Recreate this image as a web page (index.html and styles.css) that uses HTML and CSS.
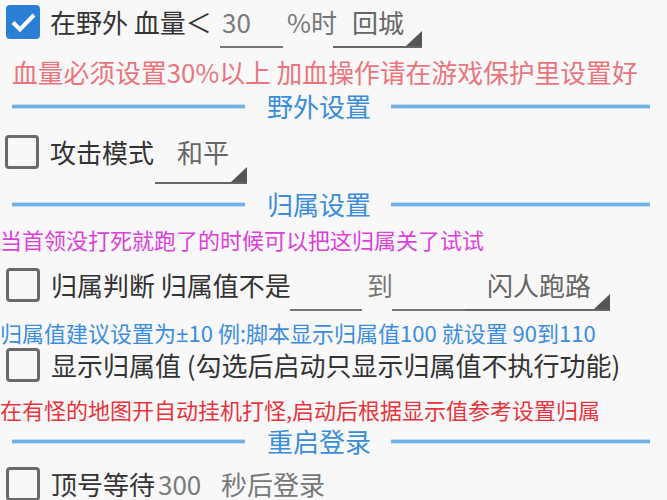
FILE: index.html
```html
<!DOCTYPE html>
<html lang="zh-CN">
<head>
<meta charset="utf-8">
<link rel="stylesheet" href="styles.css">
</head>
<body>
<div class="page">
  <div class="row row1">
    <span class="cb checked"><svg viewBox="0 0 34 34" width="34" height="34"><path d="M7 17.5 L14 24.5 L28 10" fill="none" stroke="#fff" stroke-width="4"/></svg></span>
    <span class="label l1">在野外 血量＜</span>
    <span class="field f1">30</span>
    <span class="label gray l1b">%时</span>
    <span class="spinner s1">回城</span>
  </div>
  <div class="note pink">血量必须设置30%以上 加血操作请在游戏保护里设置好</div>
  <div class="section sec1"><span class="line first"></span><span class="title">野外设置</span><span class="line"></span></div>
  <div class="row row2">
    <span class="cb"></span>
    <span class="label l2">攻击模式</span>
    <span class="spinner s2">和平</span>
  </div>
  <div class="section sec2"><span class="line first"></span><span class="title">归属设置</span><span class="line"></span></div>
  <div class="note small magenta">当首领没打死就跑了的时候可以把这归属关了试试</div>
  <div class="row row3">
    <span class="cb"></span>
    <span class="label l3">归属判断 归属值不是</span>
    <span class="field f2"></span>
    <span class="label gray to">到</span>
    <span class="field f3"></span>
    <span class="spinner s3">闪人跑路</span>
  </div>
  <div class="note small blue">归属值建议设置为<span class="latin">±</span>10 例:脚本显示归属值100 就设置 90到110</div>
  <div class="row row4">
    <span class="cb"></span>
    <span class="label">显示归属值 (勾选后启动只显示归属值不执行功能)</span>
  </div>
  <div class="note small red">在有怪的地图开自动挂机打怪,启动后根据显示值参考设置归属</div>
  <div class="section sec3"><span class="line first"></span><span class="title">重启登录</span><span class="line"></span></div>
  <div class="row row5">
    <span class="cb"></span>
    <span class="label l5">顶号等待</span>
    <span class="field f4">300</span>
    <span class="label gray">秒后登录</span>
  </div>
</div>
</body>
</html>
```

FILE: styles.css
```css
html, body {
  margin: 0;
  padding: 0;
  background: #f8f8f8;
}
body {
  width: 667px;
  height: 500px;
  overflow: hidden;
  font-family: "Noto Sans CJK SC", "Noto Sans", sans-serif;
  color: #333;
}
.page {
  display: flex;
  flex-direction: column;
}
.row {
  display: flex;
  align-items: flex-start;
  padding-left: 6px;
  box-sizing: border-box;
  font-size: 26px;
}
.cb {
  flex: none;
  width: 34px;
  height: 34px;
  box-sizing: border-box;
  border: 3px solid #6a6a6a;
  border-radius: 4px;
  margin-right: 10px;
}
.cb.checked {
  border: none;
  background: #2b7fd4;
}
.cb svg { display: block; }
.label {
  flex: none;
  line-height: 34px;
  white-space: nowrap;
}
.gray { color: #777; }
.field {
  flex: none;
  box-sizing: border-box;
  height: 43px;
  line-height: 34px;
  border-bottom: 2px solid #777;
  color: #7a7a7a;
  padding-left: 2px;
}
.spinner {
  flex: none;
  position: relative;
  box-sizing: border-box;
  height: 43px;
  line-height: 34px;
  border-bottom: 2px solid #666;
  color: #666;
}
.spinner::after {
  content: "";
  position: absolute;
  right: 0;
  bottom: 0;
  width: 0;
  height: 0;
  border-left: 16px solid transparent;
  border-bottom: 15px solid #555;
}
.row1 { height: 54px; padding-top: 5px; }
.l1 { width: 170px; }
.f1 { width: 63px; }
.l1b { width: 46px; margin-left: 4px; }
.s1 { width: 89px; padding-left: 19px; }
.row2 { height: 68px; padding-top: 13px; padding-left: 5px; }
.row2 .cb { margin-right: 11px; }
.l2 { width: 105px; }
.s2 { width: 92px; padding-left: 22px; height: 49px; }
.row3 { height: 56px; padding-top: 8px; }
.row3 .cb { margin-right: 11px; }
.l3 { width: 239px; }
.f2 { width: 72px; }
.to { margin: 0 2px 0 5px; width: 23px; }
.f3 { width: 73px; }
.s3 { width: 145px; padding-left: 22px; }
.row4 { height: 40px; padding-top: 0; }
.row4 .cb { margin-right: 11px; }
.row5 { height: 48px; padding-top: 15px; }
.row5 .cb { margin-right: 11px; }
.row5 .label, .row5 .field { line-height: 30px; margin-top: 2px; }
.l5 { width: 105px; }
.f4 { width: 65px; height: 30px; border-bottom: none; }
.note {
  white-space: nowrap;
  font-size: 25.8px;
  height: 36px;
  line-height: 36px;
  padding-left: 12px;
}
.note.small {
  font-size: 22px;
  padding-left: 0;
  height: 42px;
  line-height: 42px;
}
.latin { font-family: "Noto Sans", sans-serif; }
.pink { color: #e8757d; }
.magenta { color: #dc3fdc; }
.blue { color: #3b8de0; height: 32px !important; line-height: 32px !important; }
.red { color: #e8333d; }
.section {
  display: flex;
  align-items: center;
  padding: 0 17px 0 12px;
  font-size: 26px;
}
.section .title {
  color: #3a8dd8;
  margin: 0 20px 0 22px;
  white-space: nowrap;
}
.section .line {
  flex: 1;
  height: 3px;
  background: #6fb0e6;
  border-top: 1px solid #c3ddf3;
  border-bottom: 1px solid #c3ddf3;
}
.section .line.first { flex: none; width: 233px; }
.sec1 { height: 32px; line-height: 32px; }
.sec2 { height: 28px; line-height: 28px; }
.sec3 { height: 22px; line-height: 22px; }
```
